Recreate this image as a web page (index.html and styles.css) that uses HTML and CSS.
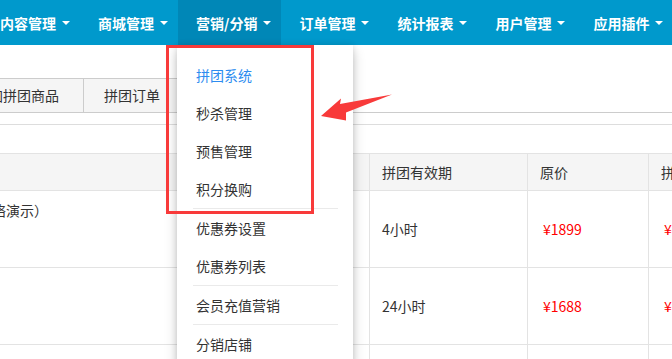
FILE: index.html
```html
<!DOCTYPE html>
<html lang="zh-CN">
<head>
<meta charset="utf-8">
<title>营销/分销</title>
<link rel="stylesheet" href="styles.css">
</head>
<body>
<header class="navbar">
  <ul class="nav">
    <li class="nav-item">内容管理<span class="caret"></span></li>
    <li class="nav-item">商城管理<span class="caret"></span></li>
    <li class="nav-item active">营销/分销<span class="caret"></span>
      <ul class="dropdown">
        <li class="dd-item current">拼团系统</li>
        <li class="dd-item">秒杀管理</li>
        <li class="dd-item">预售管理</li>
        <li class="dd-item">积分换购</li>
        <li class="dd-divider"></li>
        <li class="dd-item">优惠券设置</li>
        <li class="dd-item">优惠券列表</li>
        <li class="dd-divider"></li>
        <li class="dd-item">会员充值营销</li>
        <li class="dd-divider"></li>
        <li class="dd-item">分销店铺</li>
      </ul>
    </li>
    <li class="nav-item">订单管理<span class="caret"></span></li>
    <li class="nav-item">统计报表<span class="caret"></span></li>
    <li class="nav-item">用户管理<span class="caret"></span></li>
    <li class="nav-item">应用插件<span class="caret"></span></li>
  </ul>
</header>
<main class="content">
  <div class="tabs">
    <span class="tab">添加拼团商品</span>
    <span class="tab">拼团订单</span>
  </div>
  <div class="rule"></div>
  <table class="grid">
    <colgroup>
      <col class="c-name"><col class="c-b"><col class="c-c"><col class="c-d"><col class="c-e">
    </colgroup>
    <thead>
      <tr><th></th><th></th><th>拼团有效期</th><th>原价</th><th>拼团价</th></tr>
    </thead>
    <tbody>
      <tr><td class="name">测试商品（网络演示）</td><td></td><td>4小时</td><td><span class="price">¥1899</span></td><td><span class="price">¥1699</span></td></tr>
      <tr><td class="name"></td><td></td><td>24小时</td><td><span class="price">¥1688</span></td><td><span class="price">¥1488</span></td></tr>
      <tr><td class="name"></td><td></td><td></td><td></td><td></td></tr>
    </tbody>
  </table>
</main>
<div class="annot-box"></div>
<svg class="annot-arrow" width="672" height="359" viewBox="0 0 672 359">
  <polygon points="321,116 341,98.5 340,104 392,94.5 346,112.5 346,120.5" fill="#f83a3a"/>
</svg>
</body>
</html>
```
FILE: styles.css
```css
* { box-sizing: border-box; }
html, body { margin: 0; padding: 0; }
body {
  width: 672px;
  height: 359px;
  overflow: hidden;
  background: #fff;
  font-family: "Noto Sans CJK SC", "Noto Sans", sans-serif;
  font-size: 14px;
  color: #333;
}
ul { list-style: none; margin: 0; padding: 0; }

.navbar { height: 45px; background: #0099cc; }
.nav { display: flex; margin-left: -18px; height: 45px; }
.nav-item {
  position: relative;
  display: flex;
  align-items: center;
  padding: 0 10px 0 18px;
  height: 45px;
  color: #fff;
  font-weight: bold;
  white-space: nowrap;
}
.nav-item.active { background: #0087b7; }
.caret {
  display: inline-block;
  margin-left: 6px;
  width: 0; height: 0;
  border-top: 4px solid #fff;
  border-left: 4px solid transparent;
  border-right: 4px solid transparent;
}

.dropdown {
  position: absolute;
  top: 45px;
  left: -1px;
  width: 176px;
  padding-top: 11px;
  background: #fff;
  box-shadow: 0 6px 12px rgba(0,0,0,.2), 0 0 6px rgba(0,0,0,.12);
  z-index: 5;
  font-weight: normal;
}
.dd-item {
  height: 38px;
  line-height: 38px;
  padding-left: 19px;
  color: #333;
  font-size: 14px;
}
.dd-item.current { color: #2d8cf0; }
.dd-divider { height: 1px; margin: 0 15px 0 16px; background: #eaeaea; }

.content { padding-top: 33px; }
.tabs { display: flex; border-bottom: 1px solid #cccccc; margin-left: -46px; }
.tab {
  height: 34px;
  line-height: 33px;
  padding: 0 21px 0 20px;
  background: #f5f5f5;
  border-top: 1px solid #cccccc;
  border-right: 1px solid #cccccc;
  white-space: nowrap;
}
.tab:first-child { border-left: 1px solid #cccccc; padding-right: 24px; }
.rule { height: 1px; margin-top: 11px; background: #dddddd; }

.grid {
  margin-top: 28px;
  margin-left: -105px;
  border-collapse: collapse;
  table-layout: fixed;
  width: 977px;
}
.c-name { width: 355px; }
.c-b { width: 119px; }
.c-c { width: 158px; }
.c-d { width: 121px; }
.c-e { width: 224px; }
.grid th, .grid td {
  border: 1px solid #e3e3e3;
  text-align: left;
  padding: 0 12px;
  font-weight: normal;
  white-space: nowrap;
  overflow: hidden;
}
.grid thead tr { height: 37px; }
.grid th { background: #f5f5f5; }
.grid tbody tr { height: 77px; }
.grid td { vertical-align: middle; }
.grid td.name { vertical-align: top; padding-top: 9px; line-height: 20px; }
.price { color: #f00; margin-left: 3px; }

.annot-box {
  position: absolute;
  left: 166px;
  top: 45px;
  width: 148px;
  height: 169px;
  border: 3px solid #f83a3a;
  z-index: 10;
}
.annot-arrow {
  position: absolute;
  left: 0;
  top: 0;
  z-index: 11;
  pointer-events: none;
}
```
